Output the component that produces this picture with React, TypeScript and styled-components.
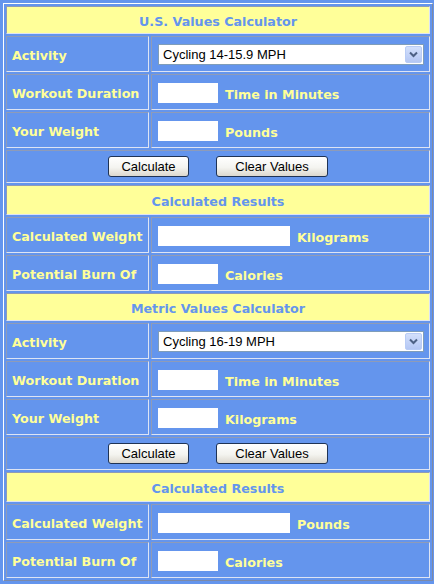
import React from 'react';
import styled, { createGlobalStyle } from 'styled-components';

const GlobalStyle = createGlobalStyle`
  html, body {
    margin: 0;
    padding: 0;
    background: #6495ed;
  }
  body {
    padding: 3px;
    font-family: "DejaVu Sans", Verdana, sans-serif;
  }
`;

interface IRow {
  label: string;
  kind: 'select' | 'input';
  value?: string;
  width?: number;
  unit?: string;
}

interface ISection {
  title: string;
  rows: IRow[];
  results: IRow[];
}

const sections: ISection[] = [
  {
    title: 'U.S. Values Calculator',
    rows: [
      { label: 'Activity', kind: 'select', value: 'Cycling 14-15.9 MPH' },
      { label: 'Workout Duration', kind: 'input', width: 60, unit: 'Time in Minutes' },
      { label: 'Your Weight', kind: 'input', width: 60, unit: 'Pounds' },
    ],
    results: [
      { label: 'Calculated Weight', kind: 'input', width: 132, unit: 'Kilograms' },
      { label: 'Potential Burn Of', kind: 'input', width: 60, unit: 'Calories' },
    ],
  },
  {
    title: 'Metric Values Calculator',
    rows: [
      { label: 'Activity', kind: 'select', value: 'Cycling 16-19 MPH' },
      { label: 'Workout Duration', kind: 'input', width: 60, unit: 'Time in Minutes' },
      { label: 'Your Weight', kind: 'input', width: 60, unit: 'Kilograms' },
    ],
    results: [
      { label: 'Calculated Weight', kind: 'input', width: 132, unit: 'Pounds' },
      { label: 'Potential Burn Of', kind: 'input', width: 60, unit: 'Calories' },
    ],
  },
];

const activities = [
  'Cycling 10-11.9 MPH',
  'Cycling 12-13.9 MPH',
  'Cycling 14-15.9 MPH',
  'Cycling 16-19 MPH',
  'Cycling 20+ MPH',
];

const DataRow: React.FC<{ row: IRow }> = ({ row }) => (
  <tr>
    <LabelCell>{row.label}</LabelCell>
    <ValueCell>
      {row.kind === 'select' ? (
        <SelectBox>
          <Select defaultValue={row.value}>
            {activities.map((a) => (
              <option key={a}>{a}</option>
            ))}
          </Select>
          <ArrowButton>
            <svg width="9" height="7" viewBox="0 0 9 7">
              <polyline
                points="1,1.5 4.5,5 8,1.5"
                fill="none"
                stroke="#4d6185"
                strokeWidth="2"
              />
            </svg>
          </ArrowButton>
        </SelectBox>
      ) : (
        <>
          <Field type="text" $w={row.width ?? 60} />
          <Unit>{row.unit}</Unit>
        </>
      )}
    </ValueCell>
  </tr>
);

export default function App() {
  return (
    <>
      <GlobalStyle />
      <Calculator>
        <colgroup>
          <col style={{ width: 143 }} />
          <col />
        </colgroup>
        <tbody>
          {sections.map((section) => (
            <React.Fragment key={section.title}>
              <tr>
                <HeaderCell colSpan={2} $h={28}>
                  {section.title}
                </HeaderCell>
              </tr>
              {section.rows.map((row) => (
                <DataRow key={row.label} row={row} />
              ))}
              <tr>
                <ButtonCell colSpan={2}>
                  <ButtonRow>
                    <PushButton type="button" $w={81}>
                      Calculate
                    </PushButton>
                    <PushButton type="reset" $w={112}>
                      Clear Values
                    </PushButton>
                  </ButtonRow>
                </ButtonCell>
              </tr>
              <tr>
                <HeaderCell colSpan={2} $h={30}>
                  Calculated Results
                </HeaderCell>
              </tr>
              {section.results.map((row) => (
                <DataRow key={row.label} row={row} />
              ))}
            </React.Fragment>
          ))}
        </tbody>
      </Calculator>
    </>
  );
}

const Calculator = styled.table`
  width: 430px;
  border-collapse: separate;
  border-spacing: 2px;
  border: 1px solid;
  border-color: #ffffff #7d8aa6 #7d8aa6 #ffffff;
  background: #6495ed;
`;

const Cell = styled.td`
  box-sizing: border-box;
  border: 1px solid;
  border-color: #8e9bb8 #dde4f4 #dde4f4 #8e9bb8;
  font-family: "DejaVu Sans", Verdana, sans-serif;
  font-size: 12.7px;
  font-weight: bold;
`;

const HeaderCell = styled(Cell)<{ $h: number }>`
  height: ${({ $h }) => $h}px;
  padding: 2px 0 0;
  background: #ffff99;
  color: #6495ed;
  text-align: center;
`;

const LabelCell = styled(Cell)`
  width: 143px;
  height: 36px;
  padding: 2px 5px 0;
  color: #ffff99;
  white-space: nowrap;
`;

const ValueCell = styled(Cell)`
  height: 36px;
  padding: 1px 4px 0 6px;
  color: #ffff99;
  white-space: nowrap;
`;

const ButtonCell = styled(Cell)`
  height: 33px;
  padding: 0;
`;

const ButtonRow = styled.div`
  display: flex;
  justify-content: center;
  gap: 27px;
`;

const PushButton = styled.button<{ $w: number }>`
  width: ${({ $w }) => $w}px;
  height: 21px;
  padding: 0;
  border: 1px solid #1f3355;
  border-radius: 3px;
  background: linear-gradient(#ffffff, #f4f4f0 55%, #dcd8ce);
  color: #000;
  font-family: "Liberation Sans", Arial, sans-serif;
  font-size: 13px;
  cursor: pointer;
`;

const SelectBox = styled.div`
  display: flex;
  align-items: stretch;
  box-sizing: border-box;
  width: 266px;
  height: 21px;
  border: 1px solid #7f9db9;
  background: #fff;
`;

const Select = styled.select`
  flex: 1;
  min-width: 0;
  appearance: none;
  border: none;
  outline: none;
  background: transparent;
  padding: 0 0 0 4px;
  color: #000;
  font-family: "Liberation Sans", Arial, sans-serif;
  font-size: 13px;
`;

const ArrowButton = styled.span`
  display: flex;
  align-items: center;
  justify-content: center;
  width: 15px;
  margin: 1px;
  border: 1px solid #b8ccf6;
  border-radius: 2px;
  background: linear-gradient(#d3e0fc, #b4c7f4);
`;

const Field = styled.input<{ $w: number }>`
  box-sizing: border-box;
  width: ${({ $w }) => $w}px;
  height: 20px;
  padding: 0 2px;
  border: 1px solid #ffffff;
  background: #ffffff;
  font-family: "Liberation Sans", Arial, sans-serif;
  font-size: 13px;
  outline: none;
`;

const Unit = styled.span`
  margin-left: 7px;
  vertical-align: -2px;
  color: #ffff99;
`;
